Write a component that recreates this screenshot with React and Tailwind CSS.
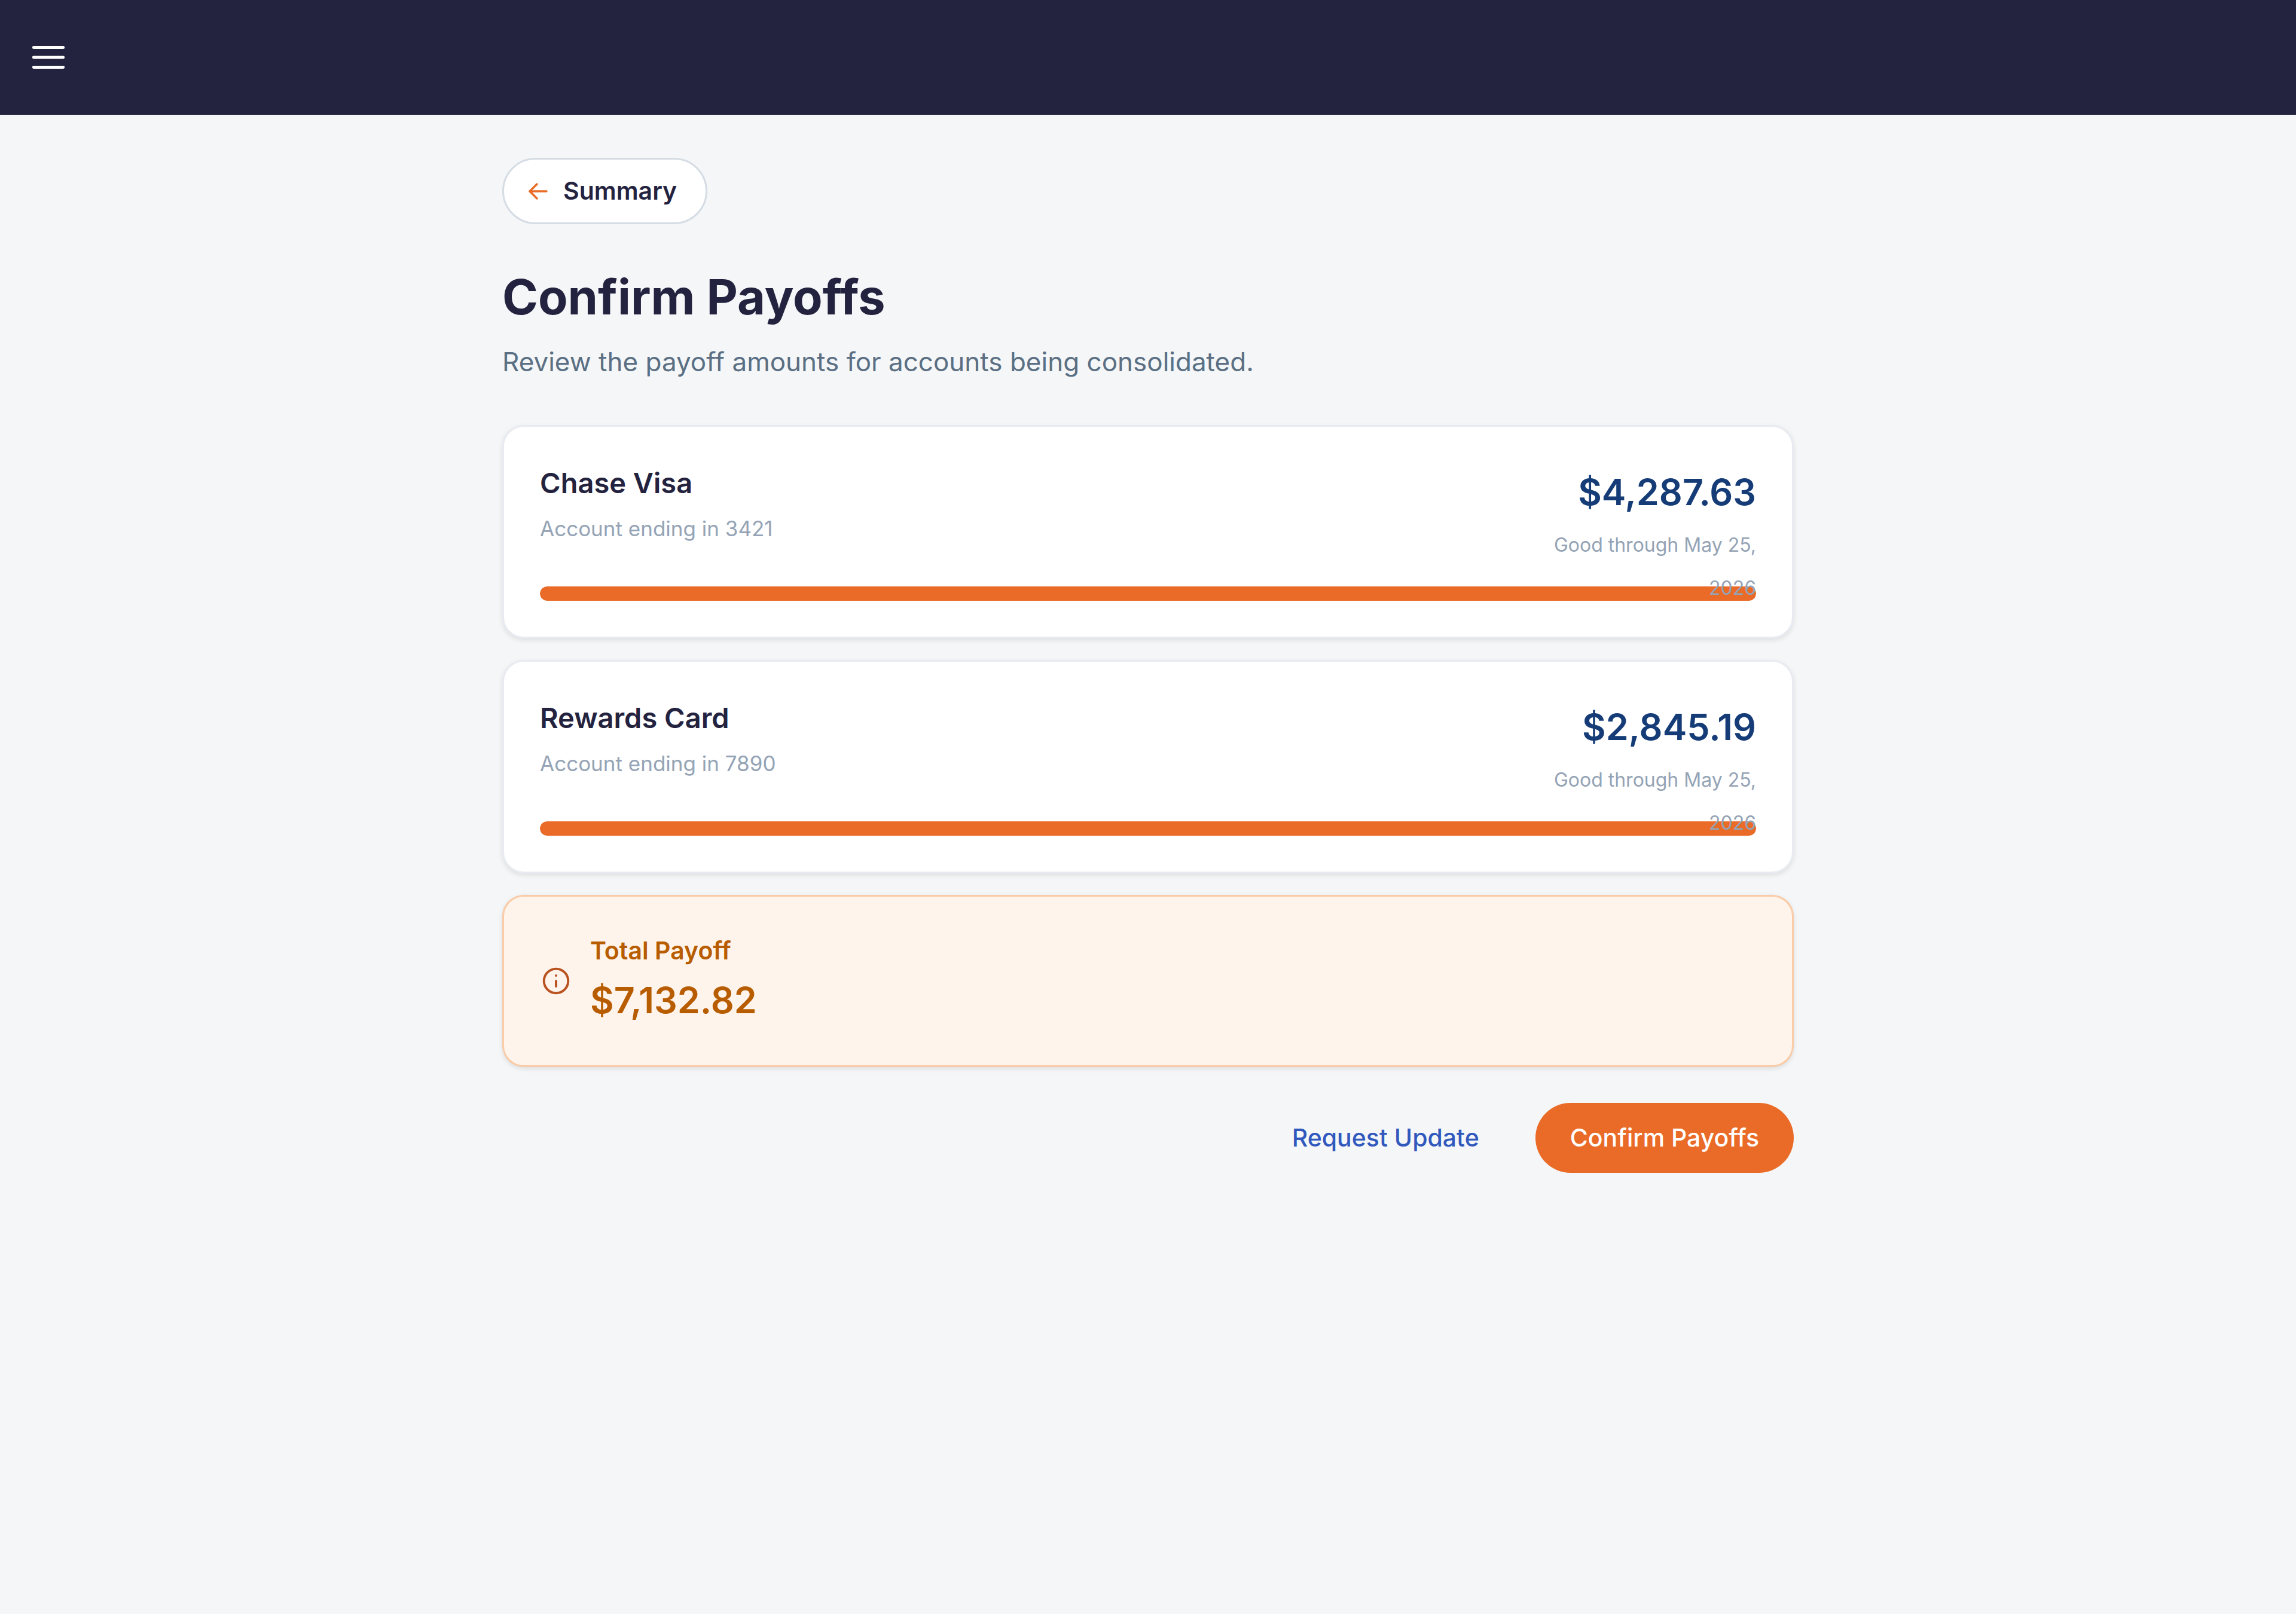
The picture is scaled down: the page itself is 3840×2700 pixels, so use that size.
const accounts = [
  { name: "Chase Visa", last4: "3421", amount: "$4,287.63", goodThrough: "May 25, 2026", percent: 100 },
  { name: "Rewards Card", last4: "7890", amount: "$2,845.19", goodThrough: "May 25, 2026", percent: 100 },
];

const iconProps = {
  viewBox: "0 0 24 24",
  fill: "none",
  stroke: "currentColor",
  strokeWidth: 1.75,
  strokeLinecap: "round",
  strokeLinejoin: "round",
  "aria-hidden": true,
};

function MenuIcon() {
  return (
    <svg {...iconProps} className="w-[66px] h-[66px]">
      <path d="M3 6h18M3 12h18M3 18h18" />
    </svg>
  );
}

function ArrowLeftIcon() {
  return (
    <svg {...iconProps} className="w-12 h-12 text-[#ea6b28]">
      <path d="M19 12H5" />
      <path d="M11 18l-6-6 6-6" />
    </svg>
  );
}

function InfoIcon() {
  return (
    <svg {...iconProps} className="w-[54px] h-[54px] shrink-0 text-[#b9521f]">
      <circle cx="12" cy="12" r="9" />
      <path d="M12 12v4M12 8h.01" />
    </svg>
  );
}

function TopBar() {
  return (
    <header className="w-full h-48 flex items-center px-12 bg-[#24233f] text-white">
      <button type="button" aria-label="Menu" className="cursor-pointer">
        <MenuIcon />
      </button>
    </header>
  );
}

function PayoffCard({ account }) {
  return (
    <section className="p-[60px] bg-white border-3 border-[#e8ebf1] rounded-[36px] shadow-[0_3px_9px_rgba(0,0,0,0.1)]">
      {/* sits above the bar, the date can wrap down onto it */}
      <div className="relative z-10 flex items-start justify-between">
        <div>
          <h2 className="text-[47px] leading-[68px] font-semibold text-[#24233f]">{account.name}</h2>
          <p className="mt-3 text-[35px] leading-[60px] text-[#94a3b5]">Account ending in {account.last4}</p>
        </div>

        <div className="max-w-[384px] text-right">
          <p className="text-[61px] leading-[98px] font-semibold text-[#153c77]">{account.amount}</p>
          <p className="mt-1 text-[32px] leading-[72px] text-[#94a3b5]">Good through {account.goodThrough}</p>
        </div>
      </div>

      <div className="-mt-[39px] h-6 rounded-full bg-[#e8ebf1] overflow-hidden">
        <div className="h-full rounded-full bg-[#ea6b28]" style={{ width: `${account.percent}%` }}></div>
      </div>
    </section>
  );
}

export default function App() {
  return (
    <div className="min-h-screen bg-[#f4f6f8] font-['Inter',sans-serif]">
      <TopBar />

      <main className="max-w-[2160px] mx-auto pt-[72px] pb-24">
        {/* BACK BUTTON */}
        <button
          type="button"
          className="h-[111px] pl-[33px] pr-12 flex items-center gap-[18px] bg-white border-3 border-[#d5dce4] rounded-full text-[41px] font-semibold text-[#24233f] cursor-pointer"
        >
          <ArrowLeftIcon />
          Summary
        </button>

        <h1 className="mt-[72px] text-[81px] leading-[100px] font-bold text-[#24233f]">Confirm Payoffs</h1>
        <p className="mt-[22px] text-[44px] leading-[72px] text-[#5a6f83]">
          Review the payoff amounts for accounts being consolidated.
        </p>

        <div className="mt-[70px] flex flex-col gap-9">
          {accounts.map((account) => (
            <PayoffCard key={account.last4} account={account} />
          ))}

          {/* TOTAL */}
          <section className="p-[60px] flex items-center gap-[30px] bg-[#fff4eb] border-3 border-[#facba6] rounded-[36px] shadow-[0_3px_9px_rgba(0,0,0,0.1)] text-[#b85c00]">
            <InfoIcon />
            <div className="flex flex-col gap-1">
              <p className="text-[41px] leading-[60px] font-semibold">Total Payoff</p>
              <p className="text-[61px] leading-[98px] font-semibold">$7,132.82</p>
            </div>
          </section>
        </div>

        {/* ACTIONS */}
        <div className="mt-[60px] flex items-center justify-end gap-9 text-[41px] font-medium">
          <button type="button" className="h-[117px] px-[58px] rounded-full text-[#3058bd] cursor-pointer">
            Request Update
          </button>
          <button type="button" className="h-[117px] px-[58px] rounded-full bg-[#ea6b28] text-white cursor-pointer">
            Confirm Payoffs
          </button>
        </div>
      </main>
    </div>
  );
}
